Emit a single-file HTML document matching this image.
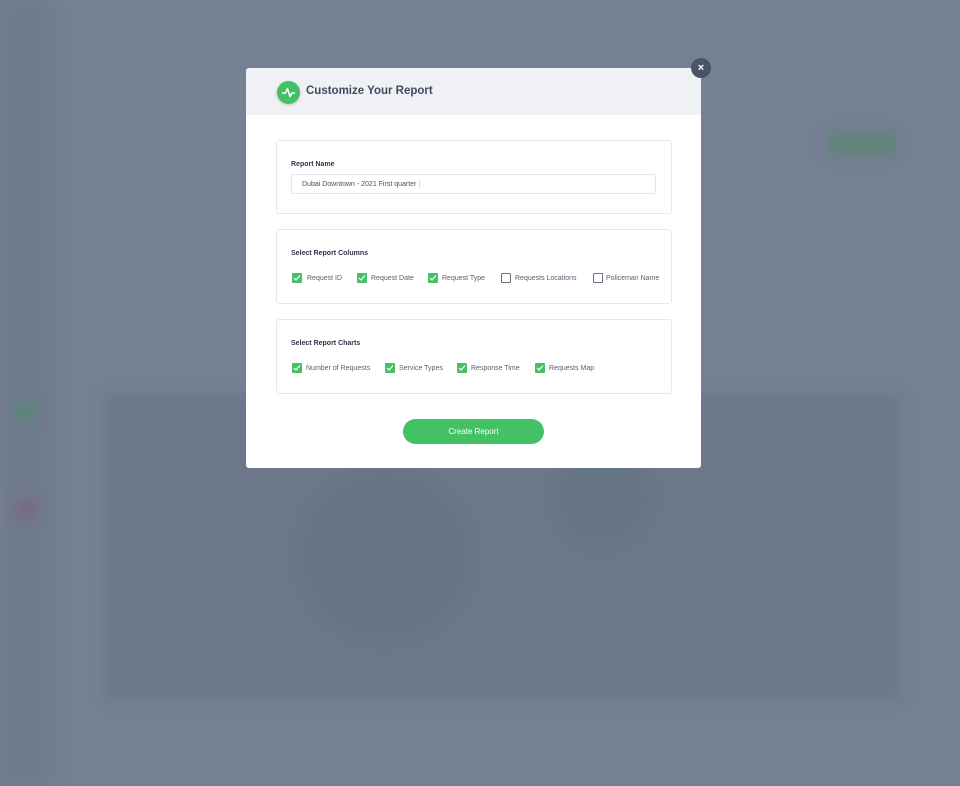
<!DOCTYPE html>
<html><head><style>
*{margin:0;padding:0;box-sizing:border-box}
body{width:960px;height:786px;overflow:hidden;background:#758093;font-family:"Liberation Sans",sans-serif;position:relative}
.b{position:absolute;filter:blur(6px)}
.m{position:absolute;left:246px;top:68px;width:455px;height:400px;background:#fff;border-radius:3px}
.hd{position:absolute;left:0;top:0;width:455px;height:47px;background:#f0f1f5;border-radius:3px 3px 0 0}
.ic{position:absolute;left:277px;top:81px;width:23px;height:23px;border-radius:50%;background:#43c164;box-shadow:0 1px 3px rgba(0,0,0,.2)}
.ttl{position:absolute;left:306px;top:85px;font-size:11.5px;font-weight:bold;color:#414a62}
.x{position:absolute;left:691px;top:58px;width:20px;height:20px;border-radius:50%;background:#4a5368;color:#fff;font-size:11px;font-weight:bold;text-align:center;line-height:20px}
.card{position:absolute;left:276px;width:396px;border:1px solid #e6e8ee;border-radius:3px;background:#fff}
.lb{position:absolute;font-size:7px;font-weight:bold;color:#2f3548}
.in{position:absolute;left:291px;top:174px;width:365px;height:20px;border:1px solid #e3e5ea;border-radius:2px;font-size:7px;color:#4a5060;padding:6px 0 0 10px}
.cb{position:absolute;width:10px;height:10px;border-radius:1px;background:#43c164}
.cb svg{position:absolute;left:1px;top:1px}
.ub{position:absolute;width:10px;height:10px;border:1.3px solid #6b7080;border-radius:1px;background:#fff}
.t{position:absolute;font-size:7px;color:#5a6072}
.btn{position:absolute;left:403px;top:419px;width:141px;height:25px;border-radius:13px;background:#43c164;color:#fff;font-size:8px;text-align:center;line-height:25px}
</style></head><body>
<div class="b" style="left:0;top:0;width:52px;height:786px;background:#707b8d"></div>
<div class="b" style="left:105px;top:395px;width:795px;height:305px;background:#6c778a"></div>
<div class="b" style="left:300px;top:470px;width:170px;height:170px;border-radius:50%;background:#667583"></div>
<div class="b" style="left:555px;top:450px;width:95px;height:95px;border-radius:50%;background:#667583"></div>
<div class="b" style="left:826px;top:133px;width:72px;height:22px;border-radius:10px;background:#5f8378"></div>
<div class="b" style="left:14px;top:400px;width:24px;height:24px;border-radius:50%;background:#5c8478"></div>
<div class="b" style="left:14px;top:497px;width:24px;height:24px;border-radius:50%;background:#7a6a80"></div>
<div class="m"><div class="hd"></div></div>
<div class="ic"><svg width="23" height="23" viewBox="0 0 23 23"><path d="M5.5 12h3l2-4.5 2.5 8 2-3.5h2.5" fill="none" stroke="#fff" stroke-width="1.5" stroke-linejoin="round" stroke-linecap="round"/></svg></div>
<div class="ttl">Customize Your Report</div>
<div class="x">×</div>
<div class="card" style="top:140px;height:74px"></div>
<div class="lb" style="left:291px;top:161px">Report Name</div>
<div class="in">Dubai Downtown - 2021 First quarter <span style="color:#9ad6a8">|</span></div>
<div class="card" style="top:229px;height:75px"></div>
<div class="lb" style="left:291px;top:250px">Select Report Columns</div>
<div class="card" style="top:319px;height:75px"></div>
<div class="lb" style="left:291px;top:340px">Select Report Charts</div>

<div class="cb" style="left:292px;top:273px"><svg width="8" height="8" viewBox="0 0 8 8"><path d="M1 4l2 2 4-4.5" fill="none" stroke="#fff" stroke-width="1.2"/></svg></div><div class="t" style="left:307px;top:275px">Request ID</div>
<div class="cb" style="left:357px;top:273px"><svg width="8" height="8" viewBox="0 0 8 8"><path d="M1 4l2 2 4-4.5" fill="none" stroke="#fff" stroke-width="1.2"/></svg></div><div class="t" style="left:371px;top:275px">Request Date</div>
<div class="cb" style="left:428px;top:273px"><svg width="8" height="8" viewBox="0 0 8 8"><path d="M1 4l2 2 4-4.5" fill="none" stroke="#fff" stroke-width="1.2"/></svg></div><div class="t" style="left:442px;top:275px">Request Type</div>
<div class="ub" style="left:501px;top:273px"></div><div class="t" style="left:515px;top:275px">Requests Locations</div>
<div class="ub" style="left:593px;top:273px"></div><div class="t" style="left:606px;top:275px">Policeman Name</div>

<div class="cb" style="left:292px;top:363px"><svg width="8" height="8" viewBox="0 0 8 8"><path d="M1 4l2 2 4-4.5" fill="none" stroke="#fff" stroke-width="1.2"/></svg></div><div class="t" style="left:306px;top:365px">Number of Requests</div>
<div class="cb" style="left:385px;top:363px"><svg width="8" height="8" viewBox="0 0 8 8"><path d="M1 4l2 2 4-4.5" fill="none" stroke="#fff" stroke-width="1.2"/></svg></div><div class="t" style="left:399px;top:365px">Service Types</div>
<div class="cb" style="left:457px;top:363px"><svg width="8" height="8" viewBox="0 0 8 8"><path d="M1 4l2 2 4-4.5" fill="none" stroke="#fff" stroke-width="1.2"/></svg></div><div class="t" style="left:471px;top:365px">Response Time</div>
<div class="cb" style="left:535px;top:363px"><svg width="8" height="8" viewBox="0 0 8 8"><path d="M1 4l2 2 4-4.5" fill="none" stroke="#fff" stroke-width="1.2"/></svg></div><div class="t" style="left:549px;top:365px">Requests Map</div>

<div class="btn">Create Report</div>
</body></html>
